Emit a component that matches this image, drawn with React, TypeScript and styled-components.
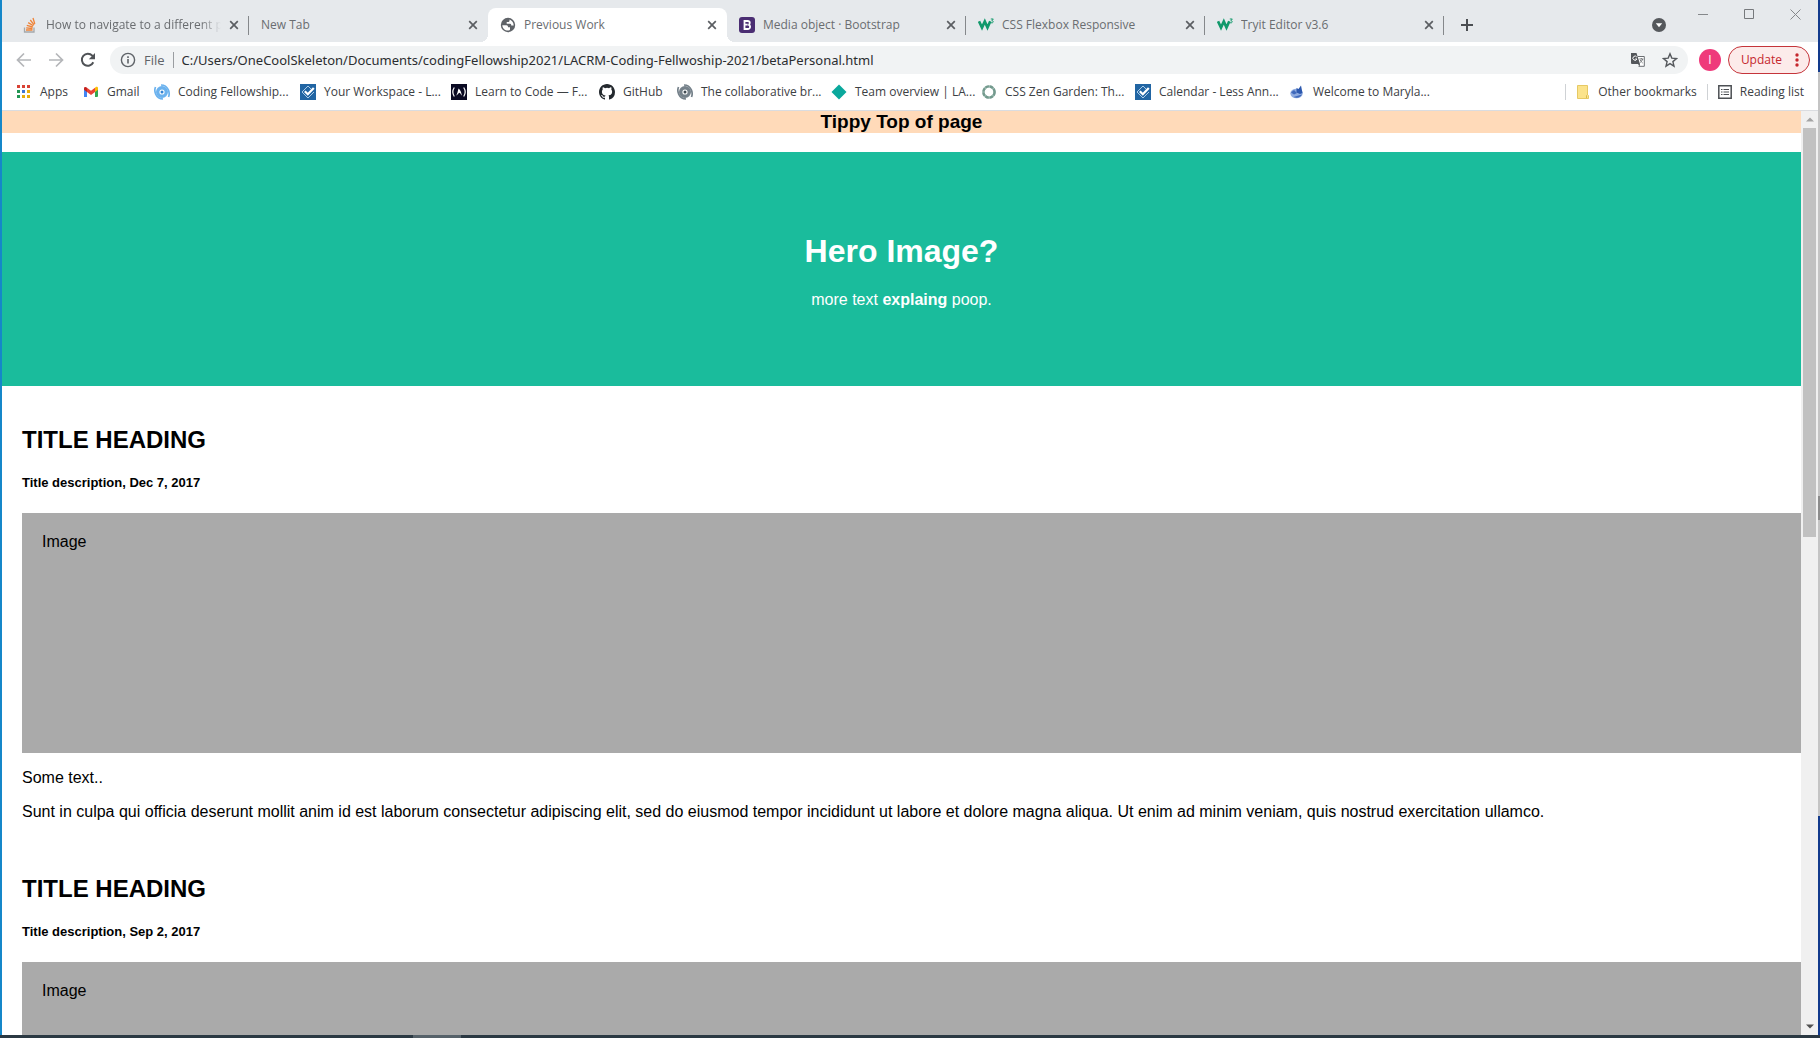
import React from "react";
import styled, { createGlobalStyle, css } from "styled-components";

const uiFont = `"Open Sans", "Noto Sans", sans-serif`;
const addressFont = `"Noto Sans", "Open Sans", sans-serif`;
const pageFont = `"Liberation Sans", Arial, sans-serif`;

const GlobalStyle = createGlobalStyle`
  *, *::before, *::after { box-sizing: border-box; }
  html, body, #root { height: 100%; }
  body { margin: 0; overflow: hidden; background: #fff; }
  button { border: 0; padding: 0; background: none; font: inherit; color: inherit; }
  svg { display: block; flex: none; }
`;

const Desktop = styled.div`
  height: 100vh;
  display: flex;
  flex-direction: column;
  background: #2b3943;
`;
const WindowRow = styled.div`
  flex: 1;
  min-height: 0;
  display: flex;
`;
const LeftEdge = styled.div`
  width: 2px;
  background: #1587c9;
`;
const RightEdge = styled.div`
  width: 2px;
  display: flex;
  flex-direction: column;
`;
const EdgePiece = styled.div<{ $grow: number; $color: string }>`
  flex: ${(p) => p.$grow} 0 0;
  background: ${(p) => p.$color};
`;
const Taskbar = styled.div`
  height: 3px;
  padding-left: 413px;
  background: #2b3943;
`;
const TaskButton = styled.div`
  width: 48px;
  height: 3px;
  background: #56626a;
`;
const BrowserWindow = styled.div`
  flex: 1;
  min-width: 0;
  display: flex;
  flex-direction: column;
  background: #fff;
`;

const TabStrip = styled.div`
  height: 42px;
  flex: none;
  display: flex;
  align-items: flex-end;
  padding-left: 8px;
  background: #e6e9ec;
  font: 12px/16px ${uiFont};
  color: #6a6d70;
`;
const Tab = styled.div<{ $active?: boolean; $line?: boolean }>`
  width: 239px;
  height: 34px;
  padding: 0 10px 0 12px;
  display: flex;
  align-items: center;
  gap: 8px;
  position: relative;
  border-radius: 8px 8px 0 0;
  ${(p) =>
    p.$active &&
    css`
      background: #fff;
      &::before,
      &::after {
        content: "";
        position: absolute;
        bottom: 0;
        width: 8px;
        height: 8px;
      }
      &::before {
        left: -8px;
        background: radial-gradient(circle at 0 0, transparent 8px, #fff 8px);
      }
      &::after {
        right: -8px;
        background: radial-gradient(circle at 100% 0, transparent 8px, #fff 8px);
      }
    `}
  ${(p) =>
    p.$line &&
    css`
      &::after {
        content: "";
        position: absolute;
        right: 0;
        top: 8px;
        width: 1px;
        height: 19px;
        background: #85888b;
      }
    `}
`;
const TabTitle = styled.span<{ $fade?: boolean }>`
  flex: 1;
  min-width: 0;
  overflow: hidden;
  white-space: nowrap;
  ${(p) => p.$fade && css`mask-image: linear-gradient(to right, #000 88%, transparent);`}
`;
const IconButton = styled.button`
  display: flex;
  align-items: center;
  justify-content: center;
`;
const NewTab = styled(IconButton)`
  height: 34px;
  padding-left: 16px;
`;
const Spacer = styled.div`
  flex: 1;
`;
const TabSearch = styled(IconButton)`
  height: 34px;
`;
const Caption = styled.div`
  align-self: flex-start;
  display: flex;
  height: 28px;
  margin-left: 14px;
`;
const CaptionButton = styled(IconButton)`
  width: 46px;
  height: 28px;
`;

const Toolbar = styled.div`
  height: 36px;
  flex: none;
  display: flex;
  align-items: center;
  padding: 0 8px 0 14px;
  font: 14px/20px ${uiFont};
`;
const NavButtons = styled.div`
  display: flex;
  gap: 16px;
  margin-right: 14px;
`;
const Omnibox = styled.form`
  flex: 1;
  height: 28px;
  display: flex;
  align-items: center;
  padding: 0 10px;
  border-radius: 14px;
  background: #f1f3f4;
  color: #5f6368;
`;
const Scheme = styled.label`
  margin-left: 8px;
  padding-right: 8px;
  border-right: 1px solid #9a9da1;
  font-size: 13px;
  line-height: 16px;
`;
const Address = styled.input`
  flex: 1;
  min-width: 0;
  margin-left: 8px;
  padding: 0;
  border: 0;
  outline: 0;
  background: transparent;
  font: 13px/20px ${addressFont};
  color: #2b2d30;
`;
const OmniboxActions = styled.div`
  display: flex;
  gap: 16px;
`;
const Avatar = styled.button`
  width: 22px;
  height: 22px;
  margin: 0 7px 0 11px;
  border-radius: 50%;
  background: #ef3a7b;
  color: #fff;
  font-size: 12px;
`;
const Update = styled.button`
  height: 28px;
  padding: 0 10px 0 12px;
  display: flex;
  align-items: center;
  gap: 13px;
  border: 1px solid #c5343a;
  border-radius: 14px;
  background: #fcebea;
  color: #c5272d;
  font-size: 12px;
`;

const Bookmarks = styled.nav`
  height: 33px;
  flex: none;
  display: flex;
  align-items: center;
  padding: 0 14px 4px;
  border-bottom: 1px solid #dadce0;
  font: 12px/16px ${uiFont};
  color: #3c4043;
`;
const Bookmark = styled.a<{ $w?: number }>`
  display: flex;
  align-items: center;
  gap: 8px;
  width: ${(p) => (p.$w ? `${p.$w}px` : "auto")};
  color: inherit;
  text-decoration: none;
  white-space: nowrap;
`;
const BarLine = styled.div`
  width: 1px;
  height: 16px;
  margin: 0 10px;
  background: #cfd2d5;
`;

const Viewport = styled.div`
  flex: 1;
  min-height: 0;
  display: flex;
`;
const Page = styled.main`
  flex: 1;
  min-width: 0;
  overflow: hidden;
  font: 16px/18px ${pageFont};
  color: #000;
`;
const TopBanner = styled.h3`
  margin: 0 0 19px;
  background: #ffdab9;
  font-size: 19px;
  line-height: 22px;
  text-align: center;
`;
const Hero = styled.header`
  padding: 60px;
  background: #1abc9c;
  color: #fff;
  text-align: center;
`;
const HeroTitle = styled.h1`
  margin: 21px 0;
  font-size: 32px;
  line-height: 37px;
`;
const Paragraph = styled.p`
  margin: 16px 0;
`;
const HeroText = styled(Paragraph)`
  margin-bottom: 17px;
`;
const Posts = styled.div`
  display: flex;
  flex-direction: column;
  gap: 19px;
  padding: 21px 0 0 20px;
`;
const Post = styled.article`
  display: flow-root;
`;
const PostTitle = styled.h2`
  margin: 19px 0 22px;
  font-size: 24px;
  line-height: 27px;
`;
const PostMeta = styled.h5`
  margin: 22px 0;
  font-size: 13px;
  line-height: 16px;
`;
const FakeImage = styled.div`
  height: 240px;
  padding: 20px;
  background: #aaa;
`;

const Scrollbar = styled.div`
  width: 17px;
  display: flex;
  flex-direction: column;
  align-items: center;
  background: #f0f0f0;
`;
const ScrollArrow = styled(IconButton)`
  width: 17px;
  height: 17px;
`;
const ScrollTrack = styled.div`
  flex: 1;
  width: 13px;
`;
const ScrollThumb = styled.div`
  height: 46%;
  background: #c1c1c1;
`;

const StackIcon = () => (
  <svg width="16" height="16" viewBox="0 0 16 16" fill="none">
    <path d="M2.5 10.500v4.500h9.500v-4.500" stroke="#a5a8aa" strokeWidth="1.300" />
    <path d="M4 13h6.500M4.200 10.800l6.300.7M4.800 8.300l6 1.700M6.200 5.600l5.200 3.200M8.300 3l3.800 4.800M11 1l1.800 5.900" stroke="#ef8236" strokeWidth="1.300" />
  </svg>
);
const GlobeIcon = () => (
  <svg width="16" height="16" viewBox="0 0 16 16">
    <circle cx="8" cy="8" r="7.200" fill="#5f6368" />
    <path d="M2.300 8.300h4.200c1.300 0 1.500 1 1.500 2h2v2.200c0 .7-1 1.100-2 1.100-3.200 0-5.600-2.300-5.700-5.300zM9.500 2.400v1.300c0 .8-.7 1.400-1.500 1.400H6.700v1.600h3.500c.9 0 1 .8 1 1.700h2.500c0-2.700-1.700-5-4.200-6z" fill="#fff" />
  </svg>
);
const BootstrapIcon = () => (
  <svg width="16" height="16" viewBox="0 0 16 16">
    <rect width="16" height="16" rx="3" fill="#4b2e73" />
    <path d="M5.500 4h3.200c2.800 0 2.600 3.500.6 3.800 2.600.3 2.400 4.200-.6 4.200H5.500zM5.500 7.700h3.200" fill="none" stroke="#fff" strokeWidth="1.800" />
  </svg>
);
const SchoolsIcon = () => (
  <svg width="16" height="16" viewBox="0 0 16 16" fill="none" stroke="#11996b">
    <path d="M1 4.300l3 6.200 2.800-6 2.700 6 2.800-6.200" strokeWidth="2.700" />
    <path d="M12.800 2h2.500l-1.400 1.600c1.800 0 1.600 2.400-.1 2.300l-1.200-.5" strokeWidth="1" />
  </svg>
);
const CloseIcon = () => (
  <svg width="10" height="10" viewBox="0 0 10 10">
    <path d="M1.200 1.200l7.600 7.600M8.800 1.200L1.200 8.800" stroke="#5b5e62" strokeWidth="1.700" />
  </svg>
);
const PlusIcon = () => (
  <svg width="14" height="14" viewBox="0 0 14 14">
    <path d="M7 1v12M1 7h12" stroke="#4b4e52" strokeWidth="2" />
  </svg>
);
const TabSearchIcon = () => (
  <svg width="14" height="14" viewBox="0 0 14 14">
    <circle cx="7" cy="7" r="7" fill="#55585c" />
    <path d="M3.800 5.300h6.400L7 9.300z" fill="#fff" />
  </svg>
);
const MinimizeIcon = () => (
  <svg width="10" height="10" viewBox="0 0 10 10"><path d="M0 5.500h10" stroke="#85888b" /></svg>
);
const MaximizeIcon = () => (
  <svg width="10" height="10" viewBox="0 0 10 10"><path d="M.5.500h9v9h-9z" fill="none" stroke="#76797c" /></svg>
);
const WindowCloseIcon = () => (
  <svg width="11" height="11" viewBox="0 0 11 11"><path d="M.5.500l10 10M10.500.500l-10 10" stroke="#85888b" /></svg>
);
const ArrowIcon = ({ flip }: { flip?: boolean }) => (
  <svg width="16" height="16" viewBox="0 0 16 16">
    <path d={flip ? "M1 8h13M8 1.500L14.500 8 8 14.500" : "M15 8H2M8 1.500L1.500 8 8 14.500"} fill="none" stroke="#b4b6b9" strokeWidth="1.700" />
  </svg>
);
const ReloadIcon = () => (
  <svg width="16" height="16" viewBox="0 0 16 16">
    <path d="M13.300 10.300A6 6 0 1 1 12.300 3.700L13.500 5" fill="none" stroke="#505357" strokeWidth="2" />
    <path d="M15 1v6.300H8.800z" fill="#505357" />
  </svg>
);
const InfoIcon = () => (
  <svg width="16" height="16" viewBox="0 0 16 16">
    <circle cx="8" cy="8" r="6.600" fill="none" stroke="#5f6368" strokeWidth="1.400" />
    <path d="M8 7v4.600M8 4.300v1.600" stroke="#5f6368" strokeWidth="1.600" />
  </svg>
);
const TranslateIcon = () => (
  <svg width="16" height="16" viewBox="0 0 16 16">
    <path d="M8 4.500h6.300v9.800H8.500" fill="#fff" stroke="#6b6e72" />
    <path d="M1 1h5.500L10 12H2a1 1 0 0 1-1-1z" fill="#54575b" />
    <path d="M8 12l1.500 2.500L10 12z" fill="#54575b" />
    <path d="M6.800 5A2.100 2.100 0 1 0 7 7H5.200" fill="none" stroke="#fff" strokeWidth="1" />
    <path d="M9.300 7h4M11.300 6v1M12.700 7c-.4 1.500-1.300 2.600-2.500 3.500M10.200 8c.6 1.300 1.500 2.200 2.500 3" fill="none" stroke="#6b6e72" strokeWidth=".9" />
  </svg>
);
const StarIcon = () => (
  <svg width="16" height="16" viewBox="0 0 16 16">
    <path d="M8 1.800l1.800 4.300 4.700.4-3.600 3.100 1.100 4.600L8 11.700l-4 2.500 1.100-4.600L1.500 6.500l4.700-.4z" fill="none" stroke="#55585c" strokeWidth="1.400" />
  </svg>
);
const DotsIcon = () => (
  <svg width="4" height="14" viewBox="0 0 4 14" fill="#c5272d">
    <circle cx="2" cy="2" r="1.700" /><circle cx="2" cy="7" r="1.700" /><circle cx="2" cy="12" r="1.700" />
  </svg>
);
const AppsIcon = () => {
  const colors = ["#d94235", "#d94235", "#d94235", "#219653", "#3f77d6", "#e8ad0c", "#219653", "#e8ad0c", "#e8ad0c"];
  return (
    <svg width="16" height="16" viewBox="0 0 16 16">
      {colors.map((c, i) => (
        <rect key={i} x={1 + (i % 3) * 5} y={1 + Math.floor(i / 3) * 5} width="3" height="3" fill={c} />
      ))}
    </svg>
  );
};
const GmailIcon = () => (
  <svg width="16" height="16" viewBox="0 0 16 16">
    <path d="M1 4v9h3V7z" fill="#4285f4" />
    <path d="M12 7v6h2a1 1 0 0 0 1-1V4z" fill="#34a853" />
    <path d="M12 3.800V8l3-2.300V4.200c0-1.500-1.600-1.800-2.500-1z" fill="#fbbc04" />
    <path d="M4 3.800V8l4 3 4-3V3.800L8 6.800z" fill="#ea4335" />
    <path d="M4 8V3.800C2.900 2.600 1 2.800 1 4.500v1.200z" fill="#c5221f" />
  </svg>
);
const SwirlIcon = ({ color, core }: { color: string; core: string }) => (
  <svg width="16" height="16" viewBox="0 0 16 16" fill="none" stroke={color}>
    <circle cx="8" cy="8" r="4.300" strokeWidth="3.400" />
    <circle cx="8" cy="8" r="1.500" fill={core} stroke="none" />
    <path d="M1.500 3C-.2 7 1.500 14.800 9 15M14.500 13c1.700-4 0-11.800-7.500-12" strokeWidth="1.700" />
  </svg>
);
const CheckIcon = () => (
  <svg width="16" height="16" viewBox="0 0 16 16">
    <rect width="16" height="16" fill="#2165a3" />
    <path d="M14 8l-6 6-6-6 6-6 3 3" fill="none" stroke="#a9cbe8" strokeWidth="1" />
    <path d="M4.800 7.300l3 3 6-6.300" fill="none" stroke="#fff" strokeWidth="2.200" />
  </svg>
);
const CampIcon = () => (
  <svg width="16" height="16" viewBox="0 0 16 16">
    <rect width="16" height="16" fill="#0a0a23" />
    <path d="M3.300 3.500c-2 3-2 6 0 9M12.700 3.500c2 3 2 6 0 9" fill="none" stroke="#fff" strokeWidth="1.200" />
    <path d="M5.300 11.500c1-2 1.500-4 2.200-7 2 1.500 3 4 3.200 7-.9-.5-1-2.500-2.200-2.800C7.400 9 6.500 11 5.300 11.500z" fill="#fff" />
  </svg>
);
const GitHubIcon = () => (
  <svg width="16" height="16" viewBox="0 0 16 16" fill="#24292e">
    <path d="M8 0C3.580 0 0 3.580 0 8c0 3.540 2.290 6.530 5.470 7.590.4.070.55-.17.55-.38 0-.19-.01-.82-.01-1.490-2.010.37-2.530-.49-2.690-.94-.09-.23-.48-.94-.82-1.130-.28-.15-.68-.52-.01-.53.63-.01 1.080.58 1.230.82.72 1.210 1.870.87 2.330.66.070-.52.28-.87.51-1.070-1.780-.2-3.640-.89-3.640-3.950 0-.87.31-1.590.82-2.150-.08-.2-.36-1.020.08-2.120 0 0 .67-.21 2.200.82a7.600 7.600 0 0 1 4 0c1.530-1.040 2.200-.82 2.200-.82.44 1.100.16 1.920.08 2.120.51.56.82 1.270.82 2.150 0 3.070-1.870 3.750-3.650 3.950.29.25.54.73.54 1.480 0 1.070-.01 1.930-.01 2.200 0 .21.15.46.55.38A8 8 0 0 0 16 8c0-4.420-3.580-8-8-8z" />
  </svg>
);
const DiamondIcon = () => (
  <svg width="16" height="16" viewBox="0 0 16 16"><path d="M8 .5L15.500 8 8 15.500.500 8z" fill="#0aa89c" /></svg>
);
const WreathIcon = () => (
  <svg width="16" height="16" viewBox="0 0 16 16" fill="none">
    <circle cx="8" cy="8" r="5.600" stroke="#a9c6bd" strokeWidth="2.400" />
    <circle cx="8" cy="8" r="5.600" stroke="#73998d" strokeWidth="2.400" strokeDasharray="3.600 .8" />
  </svg>
);
const MarylandIcon = () => (
  <svg width="16" height="16" viewBox="0 0 16 16">
    <ellipse cx="7.500" cy="9.500" rx="6.200" ry="4.800" fill="#8fabdf" />
    <path d="M7.500 4l2 1 2.500-3.500L13.500 9l-2.500 1-3.500-1.500z" fill="#2c58ae" />
    <path d="M2 8.500l3-2.500 3 3-3 1.500zM4.500 13c3.500 1.500 7 .5 8.500-2.500" fill="#3f69bb" />
  </svg>
);
const FolderIcon = () => (
  <svg width="14" height="16" viewBox="0 0 14 16">
    <path d="M1.500 1.500h10v9l1 1v3h-11z" fill="#fbe38b" stroke="#e6c964" />
    <path d="M10.500 14v-2.500l1-1" fill="none" stroke="#d9b94d" />
  </svg>
);
const ReadingIcon = () => (
  <svg width="14" height="14" viewBox="0 0 14 14" stroke="#4d5054">
    <path d="M.8.800h12.400v12.400H.8z" fill="none" strokeWidth="1.500" />
    <path d="M3 4.500h1.500M3 7h1.500M3 9.500h1.500M5.500 4.500h5.500M5.500 7h5.500M5.500 9.500h5.500" strokeWidth="1.200" />
  </svg>
);
const ScrollGlyph = ({ down }: { down?: boolean }) => (
  <svg width="8" height="5" viewBox="0 0 8 5">
    <path d={down ? "M0 .5h8l-4 4z" : "M0 4.500h8l-4-4z"} fill={down ? "#505050" : "#a3a3a3"} />
  </svg>
);

type TabInfo = { title: string; icon?: React.ReactNode; active?: boolean; line?: boolean; fade?: boolean };
const tabs: TabInfo[] = [
  { title: "How to navigate to a different pa", icon: <StackIcon />, line: true, fade: true },
  { title: "New Tab" },
  { title: "Previous Work", icon: <GlobeIcon />, active: true },
  { title: "Media object · Bootstrap", icon: <BootstrapIcon />, line: true },
  { title: "CSS Flexbox Responsive", icon: <SchoolsIcon />, line: true },
  { title: "Tryit Editor v3.6", icon: <SchoolsIcon />, line: true },
];

const bookmarks = [
  { title: "Apps", icon: <AppsIcon />, width: 67 },
  { title: "Gmail", icon: <GmailIcon />, width: 71 },
  { title: "Coding Fellowship...", icon: <SwirlIcon color="#6bb2ee" core="#2f82d4" />, width: 146 },
  { title: "Your Workspace - L...", icon: <CheckIcon />, width: 151 },
  { title: "Learn to Code — F...", icon: <CampIcon />, width: 148 },
  { title: "GitHub", icon: <GitHubIcon />, width: 78 },
  { title: "The collaborative br...", icon: <SwirlIcon color="#75818a" core="#3f4a52" />, width: 154 },
  { title: "Team overview | LA...", icon: <DiamondIcon />, width: 150 },
  { title: "CSS Zen Garden: Th...", icon: <WreathIcon />, width: 154 },
  { title: "Calendar - Less Ann...", icon: <CheckIcon />, width: 154 },
  { title: "Welcome to Maryla...", icon: <MarylandIcon />, width: 150 },
];

const posts = ["Dec 7, 2017", "Sep 2, 2017"];

export default function App() {
  return (
    <Desktop>
      <GlobalStyle />
      <WindowRow>
        <LeftEdge />
        <BrowserWindow>
          <TabStrip>
            {tabs.map((t) => (
              <Tab key={t.title} $active={t.active} $line={t.line}>
                {t.icon}
                <TabTitle $fade={t.fade}>{t.title}</TabTitle>
                <IconButton aria-label="Close tab"><CloseIcon /></IconButton>
              </Tab>
            ))}
            <NewTab aria-label="New tab"><PlusIcon /></NewTab>
            <Spacer />
            <TabSearch aria-label="Search tabs"><TabSearchIcon /></TabSearch>
            <Caption>
              <CaptionButton aria-label="Minimize"><MinimizeIcon /></CaptionButton>
              <CaptionButton aria-label="Maximize"><MaximizeIcon /></CaptionButton>
              <CaptionButton aria-label="Close"><WindowCloseIcon /></CaptionButton>
            </Caption>
          </TabStrip>

          <Toolbar>
            <NavButtons>
              <IconButton aria-label="Back"><ArrowIcon /></IconButton>
              <IconButton aria-label="Forward"><ArrowIcon flip /></IconButton>
              <IconButton aria-label="Reload"><ReloadIcon /></IconButton>
            </NavButtons>
            <Omnibox>
              <InfoIcon />
              <Scheme htmlFor="address">File</Scheme>
              <Address
                id="address"
                defaultValue="C:/Users/OneCoolSkeleton/Documents/codingFellowship2021/LACRM-Coding-Fellwoship-2021/betaPersonal.html"
              />
              <OmniboxActions>
                <IconButton type="button" aria-label="Translate"><TranslateIcon /></IconButton>
                <IconButton type="button" aria-label="Bookmark"><StarIcon /></IconButton>
              </OmniboxActions>
            </Omnibox>
            <Avatar>I</Avatar>
            <Update>Update<DotsIcon /></Update>
          </Toolbar>

          <Bookmarks>
            {bookmarks.map((b) => (
              <Bookmark key={b.title} href="#" $w={b.width}>{b.icon}{b.title}</Bookmark>
            ))}
            <Spacer />
            <BarLine />
            <Bookmark href="#"><FolderIcon />Other bookmarks</Bookmark>
            <BarLine />
            <Bookmark href="#"><ReadingIcon />Reading list</Bookmark>
          </Bookmarks>

          <Viewport>
            <Page>
              <TopBanner>Tippy Top of page</TopBanner>
              <Hero>
                <HeroTitle>Hero Image?</HeroTitle>
                <HeroText>more text <b>explaing</b> poop.</HeroText>
              </Hero>
              <Posts>
                {posts.map((date) => (
                  <Post key={date}>
                    <PostTitle>TITLE HEADING</PostTitle>
                    <PostMeta>Title description, {date}</PostMeta>
                    <FakeImage>Image</FakeImage>
                    <Paragraph>Some text..</Paragraph>
                    <Paragraph>
                      Sunt in culpa qui officia deserunt mollit anim id est laborum consectetur adipiscing elit, sed do
                      eiusmod tempor incididunt ut labore et dolore magna aliqua. Ut enim ad minim veniam, quis nostrud
                      exercitation ullamco.
                    </Paragraph>
                  </Post>
                ))}
              </Posts>
            </Page>
            <Scrollbar>
              <ScrollArrow aria-label="Scroll up"><ScrollGlyph /></ScrollArrow>
              <ScrollTrack><ScrollThumb /></ScrollTrack>
              <ScrollArrow aria-label="Scroll down"><ScrollGlyph down /></ScrollArrow>
            </Scrollbar>
          </Viewport>
        </BrowserWindow>
        <RightEdge>
          <EdgePiece $grow={72} $color="#123a8c" />
          <EdgePiece $grow={424} $color="#c4c4c4" />
          <EdgePiece $grow={24} $color="#8c8c8c" />
          <EdgePiece $grow={296} $color="#c4c4c4" />
          <EdgePiece $grow={219} $color="#123a8c" />
        </RightEdge>
      </WindowRow>
      <Taskbar><TaskButton /></Taskbar>
    </Desktop>
  );
}
